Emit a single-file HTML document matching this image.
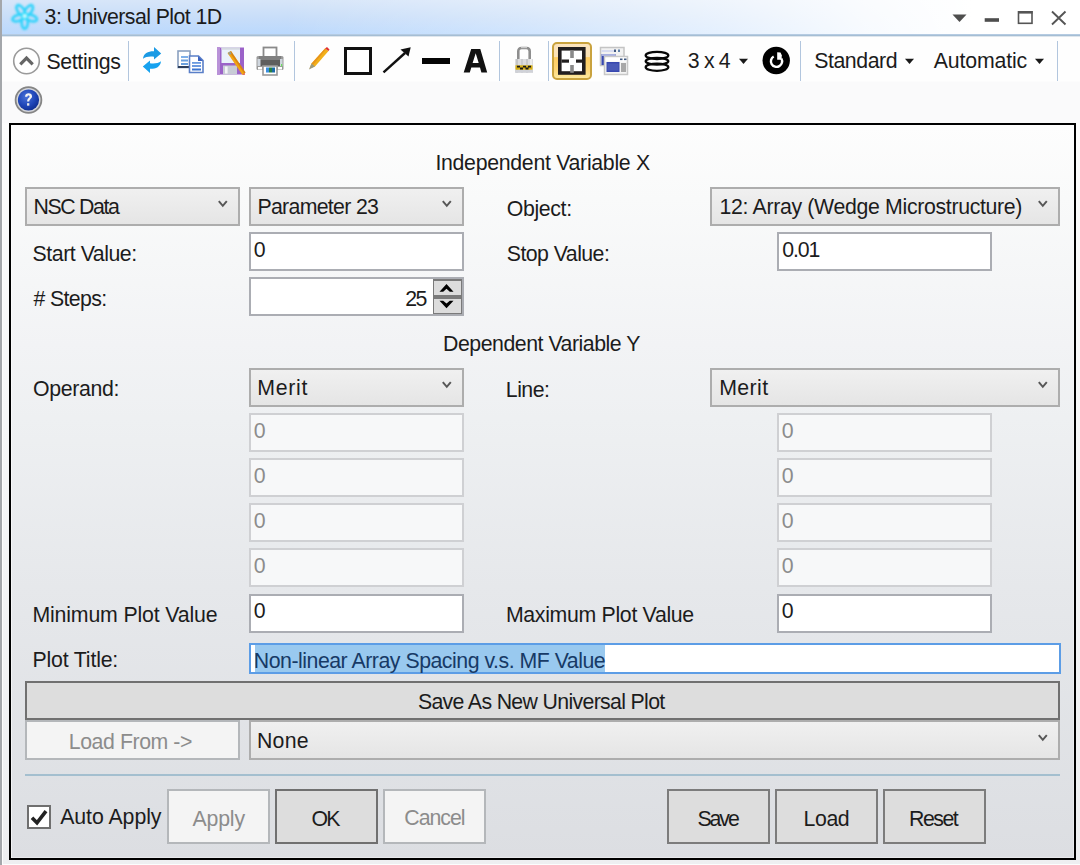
<!DOCTYPE html>
<html><head><meta charset="utf-8">
<style>
*{box-sizing:border-box;margin:0;padding:0}
html,body{width:1080px;height:865px;overflow:hidden}
body{position:relative;background:#fcfcfc;font-family:"Liberation Sans",sans-serif;font-size:20px;color:#1c1c1c}
.a{position:absolute}
svg{position:absolute;overflow:visible}
.t{position:absolute;white-space:nowrap;line-height:20px;height:20px;font-size:21.3px}
.gray{color:#8c8c8c}
.sel{color:#173a66}
#leftstrip{left:0;top:0;width:2px;height:865px;background:#a4a7ab}
#title{left:2px;top:0;width:1078px;height:34px;background:linear-gradient(90deg,rgba(255,255,255,0) 0%,rgba(255,255,255,0) 26%,rgba(255,255,255,0.3) 48%,rgba(255,255,255,0.6) 66%,rgba(255,255,255,0.88) 80%,#fff 90%,#fff 100%),linear-gradient(180deg,#d7e6f9 0%,#c9def9 50%,#bbd9fd 100%)}
#titleline{left:2px;top:34px;width:1078px;height:3px;background:linear-gradient(180deg,#b5cbe2 0px,#b5cbe2 1px,#a5bed4 1px,#a5bed4 2px,#dfe6ed 2px,#dfe6ed 3px)}
#toolbar{left:2px;top:37px;width:1078px;height:86px;background:linear-gradient(180deg,#fefefe 0px,#fefefe 44px,#fafafb 45px,#fafafb 87px)}
#margin{left:2px;top:123px;width:1078px;height:742px;background:linear-gradient(180deg,#fcfcfc 0%,#f6f7f8 40%,#eeeff1 100%);border-left:1px solid #fdfdfd}
.sep{position:absolute;width:1px;background:#b2c6de}
#panel{left:9px;top:123px;width:1067px;height:737px;border:2px solid #000;background:linear-gradient(180deg,#fdfdfd 0%,#f9fafa 10%,#f2f3f5 30%,#eef0f2 40%,#e6e8eb 63%,#dcdee2 100%);box-shadow:inset 1px 1px 0 rgba(255,255,255,0.6),inset -1px -1px 0 rgba(255,255,255,0.35)}
#below{left:2px;top:860px;width:1078px;height:5px;background:#ecedef}
#right{left:1076px;top:123px;width:4px;height:742px;background:#f3f3f5}
.combo{position:absolute;height:39px;border:2px solid #adadad;background:linear-gradient(180deg,#f0f0f0,#e5e5e5)}
.tb{position:absolute;height:39px;border:2px solid #abadb3;background:#fff}
.tbd{position:absolute;height:39px;border:2px solid #cfd0d3;background:#f7f8f9}
.btn{position:absolute;border:2px solid #707070;background:#dddddd}
.btnd{position:absolute;border:2px solid #b4b7ba;background:#f4f4f4}
</style></head><body>

<div id="leftstrip" class="a"></div>
<div id="title" class="a"></div>
<div id="titleline" class="a"></div>
<div id="toolbar" class="a"></div>
<div id="margin" class="a"></div>

<!-- title icon -->
<svg style="left:8px;top:0px" width="34" height="32" viewBox="0 0 34 32">
  <defs><filter id="bl" x="-20%" y="-20%" width="140%" height="140%"><feGaussianBlur stdDeviation="1"/></filter></defs>
  <g filter="url(#bl)" fill="none" stroke="#2fd3fb" stroke-width="2.6">
    <ellipse cx="23.2" cy="15.9" rx="6.4" ry="3.1" transform="rotate(90 16.7 15.9)"/>
    <ellipse cx="23.2" cy="15.9" rx="6.4" ry="3.1" transform="rotate(162 16.7 15.9)"/>
    <ellipse cx="23.2" cy="15.9" rx="6.4" ry="3.1" transform="rotate(234 16.7 15.9)"/>
    <ellipse cx="23.2" cy="15.9" rx="6.4" ry="3.1" transform="rotate(306 16.7 15.9)"/>
    <ellipse cx="23.2" cy="15.9" rx="6.4" ry="3.1" transform="rotate(18 16.7 15.9)"/>
    <circle cx="16.7" cy="15.9" r="2.5" fill="#f4ffff" stroke="#3ae4fc" stroke-width="2"/>
  </g>
</svg>

<!-- window controls -->
<svg style="left:950px;top:8px" width="125" height="20" viewBox="0 0 125 20">
  <path d="M2.5 6.5 L16.5 6.5 L9.5 14 Z" fill="#4e4e4e"/>
  <rect x="34.7" y="10.2" width="14.3" height="3.6" fill="#4e4e4e"/>
  <rect x="68.5" y="3.8" width="13.5" height="11.5" fill="none" stroke="#555" stroke-width="1.6"/>
  <rect x="68" y="3" width="14.6" height="2.6" fill="#555"/>
  <path d="M102 3.5 L115.5 16.5 M115.5 3.5 L102 16.5" stroke="#555" stroke-width="1.9"/>
</svg>

<!-- settings chevron circle -->
<svg style="left:12px;top:47px" width="29" height="29" viewBox="0 0 29 29">
  <circle cx="14.5" cy="14" r="12.8" fill="#fff" stroke="#9a9a9a" stroke-width="1.6"/>
  <path d="M8.3 17.3 L14.5 11.1 L20.7 17.3" fill="none" stroke="#666" stroke-width="3.2"/>
</svg>

<div class="sep" style="left:128px;top:41px;height:40px"></div>
<div class="sep" style="left:294px;top:41px;height:40px"></div>
<div class="sep" style="left:499px;top:41px;height:40px"></div>
<div class="sep" style="left:548px;top:41px;height:40px"></div>
<div class="sep" style="left:800px;top:41px;height:40px"></div>
<div class="sep" style="left:1057px;top:41px;height:40px"></div>

<!-- refresh -->
<svg style="left:142px;top:46px" width="20" height="28" viewBox="0 0 20 28">
  <path d="M1 12.8 C1.5 7 6.5 5 12 5.2 L12 1 L19.2 7.5 L12 13.5 L12 10.8 C7.5 10.3 3.5 10.8 1 12.8 Z" fill="#1b9ae4"/>
  <path d="M19 15.2 C18.5 21 13.5 23 8 22.8 L8 27 L0.8 20.5 L8 14.5 L8 17.2 C12.5 17.7 16.5 17.2 19 15.2 Z" fill="#17a2ef"/>
</svg>

<!-- copy -->
<svg style="left:177px;top:50px" width="28" height="24" viewBox="0 0 28 24">
  <rect x="1" y="1" width="12" height="16.5" fill="#fff" stroke="#8aa0c0" stroke-width="1.6"/>
  <rect x="1" y="16" width="12" height="2" fill="#2c3e5c"/>
  <rect x="4" y="6" width="7" height="2" fill="#7fb0e8"/>
  <rect x="4" y="9.5" width="7" height="2" fill="#6aa0de"/>
  <rect x="4" y="13" width="7" height="2" fill="#6aa0de"/>
  <path d="M12.5 6 L21.5 6 L26 10.5 L26 22.5 L12.5 22.5 Z" fill="#fff" stroke="#5a7fc8" stroke-width="1.6"/>
  <path d="M21 6 L21 11 L26 11 Z" fill="#3a62c0"/>
  <rect x="15" y="12" width="9" height="1.8" fill="#6a9ae0"/>
  <rect x="15" y="15.2" width="9" height="1.6" fill="#4a80d8"/>
  <rect x="15" y="18.5" width="9" height="2" fill="#3c74d0"/>
</svg>

<!-- save floppy with pencil -->
<svg style="left:216px;top:46px" width="30" height="30" viewBox="0 0 30 30">
  <rect x="1.5" y="1.5" width="26.5" height="27" fill="#9b62c8"/>
  <rect x="1" y="1" width="3" height="28" fill="#b992d8"/>
  <rect x="5.5" y="1.5" width="18.5" height="15.5" fill="#e9f1fb"/><rect x="5.5" y="1.5" width="18.5" height="2.2" fill="#d4d8e0"/>
  <rect x="7" y="19.5" width="14" height="9" fill="#c8ccd6"/>
  <rect x="9" y="20.5" width="2.6" height="7" fill="#f4f4f8"/>
  <path d="M11.5 7 L15 5 L29.5 26.5 L26.5 29 Z" fill="#f2a414"/><path d="M15 5 L29.5 26.5 L28.3 27.5 L13.5 6 Z" fill="#c87010" opacity="0.6"/>
  <path d="M12 6.5 L14.5 5.5 L15.5 8 L13 9 Z" fill="#9aa090"/>
  <path d="M27 28.5 L29 27 L28.5 29 Z" fill="#e02020"/>
</svg>

<!-- printer -->
<svg style="left:255px;top:46px" width="30" height="30" viewBox="0 0 30 30">
  <rect x="8.5" y="1.5" width="13" height="10" fill="#fff" stroke="#8a8a8a" stroke-width="1.8"/>
  <rect x="1.5" y="10" width="27" height="14" rx="1.5" fill="#9a9a9a"/>
  <rect x="4.5" y="10" width="21" height="10" fill="#5e5e5e"/>
  <rect x="4.5" y="10" width="21" height="4" fill="#808080"/>
  <rect x="2.5" y="13" width="3" height="7" fill="#cfd6de"/>
  <rect x="25" y="13" width="2.5" height="7" fill="#cfd6de"/>
  <rect x="26" y="18" width="1.2" height="2.5" fill="#6ee060"/>
  <rect x="3" y="21" width="4" height="2.5" fill="#fff"/>
  <rect x="23" y="21" width="4" height="2.5" fill="#fff"/>
  <rect x="8" y="20" width="14" height="9" fill="#fff" stroke="#999" stroke-width="1.6"/>
  <rect x="11" y="21.5" width="3" height="5" fill="#3a8ee0"/>
  <rect x="14" y="21.5" width="3" height="5" fill="#2a8040"/>
  <rect x="17" y="21.5" width="3" height="5" fill="#1a6aa8"/>
</svg>

<!-- pencil -->
<svg style="left:308px;top:46px" width="23" height="25" viewBox="0 0 23 25">
  <path d="M1.5 22.5 L3.5 17.5 L17 2.5 L20.5 5 L7 20.5 Z" fill="#f2b01a"/>
  <path d="M3.5 17.5 L17 2.5 L18 3.2 L5 19 Z" fill="#e8941a"/>
  <path d="M17 2.5 L19 1 L21.5 3.5 L20.5 5 Z" fill="#e03030"/>
  <path d="M1 23.5 L3.5 17.5 L7 20.5 Z" fill="#9a9a80"/>
</svg>

<!-- square -->
<div class="a" style="left:344px;top:47px;width:27.5px;height:27.5px;border:3.6px solid #111;background:#fff"></div>

<!-- arrow -->
<svg style="left:380px;top:45px" width="34" height="30" viewBox="0 0 34 30">
  <path d="M3.5 27.3 L25 8" stroke="#111" stroke-width="2.4"/>
  <path d="M20.5 4.5 L30.7 2.3 L28.5 11.6 Z" fill="#111"/>
</svg>

<!-- line -->
<div class="a" style="left:422px;top:57.5px;width:28px;height:6.8px;background:#050505"></div>

<!-- A -->
<svg style="left:460px;top:44px" width="32" height="32" viewBox="0 0 32 32">
  <path d="M3.7 28.5 L11.2 5 L20.3 5 L27.2 28.5 L21.4 28.5 L20 23.6 L11.3 23.6 L9.8 28.5 Z M12.6 19 L18.7 19 L15.7 9.2 Z" fill="#111" fill-rule="evenodd"/>
</svg>

<!-- lock -->
<svg style="left:514px;top:46px" width="20" height="28" viewBox="0 0 20 28">
  <path d="M4.3 13.5 V5.2 Q4.3 2 7.5 2 H12.5 Q15.7 2 15.7 5.2 V13.5" fill="none" stroke="#8e8e8e" stroke-width="2.6"/>
  <rect x="7" y="1" width="6" height="1.2" fill="#c8c8c8"/>
  <rect x="1" y="13" width="18" height="13.7" fill="#dcdcde"/>
  <rect x="2" y="13" width="2" height="13.7" fill="#c4c6c8"/>
  <rect x="7" y="13" width="2" height="13.7" fill="#cacccf"/>
  <rect x="12" y="13" width="2" height="13.7" fill="#c6c8ca"/>
  <rect x="16" y="13" width="2" height="13.7" fill="#eeeeee"/>
  <rect x="1.5" y="19.3" width="17" height="4.4" fill="#d6ae12"/>
  <path d="M3 19.8 h3 v1.8 h-3z M9 19.8 h3 v1.8 h-3z M14 19.8 h3 v1.8 h-3z M6 21.6 h3 v1.8 h-3z M11.5 21.6 h3 v1.8 h-3z" fill="#1a1a1a"/>
  <rect x="1" y="24" width="18" height="2.7" fill="#d0d2d8"/>
</svg>

<!-- highlighted grid button -->
<div class="a" style="left:552px;top:42px;width:39.5px;height:37.5px;border:2px solid #c9a23e;border-radius:5px;background:linear-gradient(180deg,#fbe3bd 0%,#fbe2b5 38%,#ffcd62 40%,#ffd676 75%,#fde9a0 100%)"></div>
<svg style="left:557px;top:46px" width="30" height="30" viewBox="0 0 30 30">
  <rect x="2.8" y="2.8" width="24" height="24.2" fill="#fff" stroke="#221e1f" stroke-width="3.6"/>
  <rect x="4.5" y="13.5" width="7.5" height="3.2" fill="#221e1f"/>
  <rect x="19" y="13.5" width="7.5" height="3.2" fill="#221e1f"/>
  <rect x="13.2" y="4.5" width="3.6" height="7.5" fill="#8a8a8a"/>
  <rect x="13.2" y="19" width="3.6" height="7.8" fill="#8a8a8a"/>
</svg>

<!-- window icon -->
<svg style="left:599px;top:46px" width="30" height="30" viewBox="0 0 30 30">
  <rect x="1.5" y="1.5" width="23.5" height="18" fill="#f2f2f2" stroke="#c4c4c4" stroke-width="1.5"/>
  <rect x="2.5" y="4" width="13" height="2" fill="#d8dcf0"/>
  <rect x="15" y="3.5" width="2" height="2.5" fill="#405880"/>
  <rect x="19" y="3.5" width="2" height="2.5" fill="#6080a8"/>
  <rect x="2.5" y="8" width="14" height="11" fill="#3848b0"/>
  <rect x="2.5" y="8" width="14" height="2" fill="#a8b0e0"/>
  <rect x="5.5" y="10.5" width="23" height="18" fill="#f4f4f4" stroke="#c8c8c8" stroke-width="1.5"/>
  <rect x="6.5" y="11.5" width="21" height="4" fill="#fff"/>
  <rect x="21" y="12.5" width="2.5" height="1.6" fill="#405880"/>
  <rect x="25" y="12.5" width="2.5" height="1.6" fill="#405880"/>
  <rect x="7.5" y="16" width="13" height="10" fill="#3848b0"/>
  <rect x="8.5" y="17.5" width="11" height="7" fill="#4a5ab8"/>
  <rect x="22" y="17" width="5" height="9" fill="#a8a8a8"/>
</svg>

<!-- layers -->
<svg style="left:643px;top:49px" width="29" height="24" viewBox="0 0 29 24">
  <g fill="none" stroke="#080808" stroke-width="2.3">
    <ellipse cx="14" cy="6.4" rx="11.3" ry="3.6"/>
    <ellipse cx="14" cy="12.2" rx="11.3" ry="3.4"/>
    <ellipse cx="14" cy="18.2" rx="11.3" ry="3.6"/>
  </g>
</svg>

<!-- dropdown arrows -->
<svg style="left:738px;top:58px" width="11" height="7" viewBox="0 0 11 7"><path d="M1 0.8 L10 0.8 L5.5 6 Z" fill="#1a1a1a"/></svg>
<svg style="left:904px;top:58px" width="11" height="7" viewBox="0 0 11 7"><path d="M1 0.8 L10 0.8 L5.5 6 Z" fill="#1a1a1a"/></svg>
<svg style="left:1034px;top:58px" width="11" height="7" viewBox="0 0 11 7"><path d="M1 0.8 L10 0.8 L5.5 6 Z" fill="#1a1a1a"/></svg>

<!-- power/reset icon -->
<svg style="left:762px;top:46px" width="29" height="29" viewBox="0 0 29 29">
  <circle cx="14.2" cy="14.55" r="13.7" fill="#000"/>
  <path d="M11.7 10.45 A5.6 5.6 0 1 0 19.35 12.5" fill="none" stroke="#fff" stroke-width="2.4"/>
  <path d="M15.2 6.3 L18.5 6.6 L19.8 9.2 L19.6 13.8 L15.2 13.8 Z" fill="#fff"/>
</svg>

<!-- help icon -->
<svg style="left:14px;top:86px" width="29" height="28" viewBox="0 0 29 28">
  <defs><radialGradient id="hg" cx="0.4" cy="0.35" r="0.7"><stop offset="0" stop-color="#4a72d8"/><stop offset="0.6" stop-color="#1f46b8"/><stop offset="1" stop-color="#0e2c8e"/></radialGradient></defs>
  <circle cx="14.5" cy="14" r="12.9" fill="#d4d6da" stroke="#858585" stroke-width="1.8"/>
  <circle cx="14.5" cy="14" r="10.6" fill="url(#hg)"/>
  <g transform="translate(14.6 13.5) scale(0.82) translate(-14.8 -13)">
  <path d="M10.5 9.5 C10.5 6.8 12.5 5.5 14.8 5.5 C17.3 5.5 19 7 19 9.2 C19 11.8 15.8 12.2 15.6 15.5 L13 15.5 C13 11.6 16 11 16 9.4 C16 8.5 15.5 8 14.7 8 C13.8 8 13.3 8.7 13.3 9.5 Z" fill="#f4f4f4"/>
  <rect x="12.9" y="17.5" width="2.8" height="3" fill="#e8e8e8"/>
  </g>
</svg>

<!-- panel -->
<div class="a" style="left:2px;top:864px;width:1078px;height:1px;background:#fdfdfd"></div>
<div id="panel" class="a"></div>

<div class="combo" style="left:25px;top:187px;width:215px"></div>
<div class="combo" style="left:249px;top:187px;width:215px"></div>
<div class="combo" style="left:710px;top:187px;width:350px"></div>

<div class="tb" style="left:249px;top:232px;width:215px"></div>
<div class="tb" style="left:777px;top:232px;width:215px"></div>
<div class="tb" style="left:249px;top:277px;width:215px"></div>

<!-- spinner -->
<div class="a" style="left:433px;top:279px;width:29px;height:35px;background:#7a7a7a"></div>
<div class="a" style="left:434px;top:281px;width:26.5px;height:14px;background:#dcdcdc"></div>
<div class="a" style="left:434px;top:298.5px;width:26.5px;height:14px;background:#dcdcdc"></div>
<svg style="left:439px;top:283px" width="16" height="26" viewBox="0 0 16 26">
  <path d="M0.5 8.7 L7.5 1 L14.5 8.7 L10.8 8.7 L7.5 5.8 L4.2 8.7 Z" fill="#000"/>
  <path d="M0.5 17.8 L7.5 25.3 L14.5 17.8 L10.8 17.8 L7.5 20.6 L4.2 17.8 Z" fill="#000"/>
</svg>

<div class="combo" style="left:249px;top:368px;width:215px"></div>
<div class="combo" style="left:710px;top:368px;width:350px"></div>

<div class="tbd" style="left:249px;top:413px;width:215px"></div>
<div class="tbd" style="left:777px;top:413px;width:215px"></div>
<div class="tbd" style="left:249px;top:458px;width:215px"></div>
<div class="tbd" style="left:777px;top:458px;width:215px"></div>
<div class="tbd" style="left:249px;top:503px;width:215px"></div>
<div class="tbd" style="left:777px;top:503px;width:215px"></div>
<div class="tbd" style="left:249px;top:548px;width:215px"></div>
<div class="tbd" style="left:777px;top:548px;width:215px"></div>

<div class="tb" style="left:249px;top:594px;width:215px"></div>
<div class="tb" style="left:777px;top:594px;width:215px"></div>

<div class="a" style="left:249px;top:643px;width:812px;height:31px;border:2px solid #5c9de6;background:#fff"></div>
<div class="a" style="left:255px;top:645px;width:350px;height:27px;background:#99c9ef"></div>

<div class="btn" style="left:25px;top:681px;width:1035px;height:39px"></div>
<div class="btnd" style="left:25px;top:720px;width:215px;height:40px"></div>
<div class="combo" style="left:249px;top:720px;width:811px;height:40px"></div>

<!-- combo chevrons -->
<svg style="left:217px;top:199px" width="12" height="9" viewBox="0 0 12 9"><path d="M1.8 2.2 L5.8 6.8 L9.8 2.2" fill="none" stroke="#575757" stroke-width="2.0"/></svg>
<svg style="left:441px;top:199px" width="12" height="9" viewBox="0 0 12 9"><path d="M1.8 2.2 L5.8 6.8 L9.8 2.2" fill="none" stroke="#575757" stroke-width="2.0"/></svg>
<svg style="left:1037px;top:199px" width="12" height="9" viewBox="0 0 12 9"><path d="M1.8 2.2 L5.8 6.8 L9.8 2.2" fill="none" stroke="#575757" stroke-width="2.0"/></svg>
<svg style="left:441px;top:380px" width="12" height="9" viewBox="0 0 12 9"><path d="M1.8 2.2 L5.8 6.8 L9.8 2.2" fill="none" stroke="#575757" stroke-width="2.0"/></svg>
<svg style="left:1037px;top:380px" width="12" height="9" viewBox="0 0 12 9"><path d="M1.8 2.2 L5.8 6.8 L9.8 2.2" fill="none" stroke="#575757" stroke-width="2.0"/></svg>
<svg style="left:1037px;top:733px" width="12" height="9" viewBox="0 0 12 9"><path d="M1.8 2.2 L5.8 6.8 L9.8 2.2" fill="none" stroke="#575757" stroke-width="2.0"/></svg>

<div class="a" style="left:25px;top:774px;width:1035px;height:2px;background:#a4bfcf"></div>

<div class="a" style="left:27px;top:805px;width:24px;height:24px;border:2px solid #6f6f6f;background:#fff"></div>
<svg style="left:29px;top:807px" width="20" height="20" viewBox="0 0 20 20"><path d="M3 10.8 L8 15.8 L17 4.2" fill="none" stroke="#222" stroke-width="3.6"/></svg>

<div class="btnd" style="left:167px;top:789px;width:103px;height:55px"></div>
<div class="btn" style="left:275px;top:789px;width:103px;height:55px"></div>
<div class="btnd" style="left:383px;top:789px;width:103px;height:55px"></div>
<div class="btn" style="left:667px;top:789px;width:103px;height:55px;border-color:#7c7c7c"></div>
<div class="btn" style="left:775px;top:789px;width:103px;height:55px;border-color:#7c7c7c"></div>
<div class="btn" style="left:883px;top:789px;width:103px;height:55px;border-color:#7c7c7c"></div>

<div id="t_title" class="t" style="left:44.6px;top:7px;letter-spacing:-0.558px">3: Universal Plot 1D</div>
<div id="t_settings" class="t" style="left:46.4px;top:52px;letter-spacing:-0.343px">Settings</div>
<div id="t_3x4" class="t" style="left:687.8px;top:51px;letter-spacing:-0.825px">3 x 4</div>
<div id="t_std" class="t" style="left:814.2px;top:51px;letter-spacing:-0.429px">Standard</div>
<div id="t_auto" class="t" style="left:933.7px;top:51px;letter-spacing:-0.150px">Automatic</div>
<div id="t_indep" class="t" style="left:435.4px;top:153px;letter-spacing:-0.295px">Independent Variable X</div>
<div id="t_nsc" class="t" style="left:33.5px;top:197px;letter-spacing:-1.357px">NSC Data</div>
<div id="t_param" class="t" style="left:257.4px;top:197px;letter-spacing:-0.682px">Parameter 23</div>
<div id="t_object" class="t" style="left:506.8px;top:199px;letter-spacing:-0.367px">Object:</div>
<div id="t_array" class="t" style="left:719.5px;top:197px;letter-spacing:-0.332px">12: Array (Wedge Microstructure)</div>
<div id="t_start" class="t" style="left:32.6px;top:244px;letter-spacing:-0.473px">Start Value:</div>
<div id="t_start0" class="t" style="left:253.7px;top:240px;letter-spacing:0.000px">0</div>
<div id="t_stop" class="t" style="left:506.8px;top:244px;letter-spacing:-0.550px">Stop Value:</div>
<div id="t_stop0" class="t" style="left:782.3px;top:240px;letter-spacing:-1.133px">0.01</div>
<div id="t_steps" class="t" style="left:33.6px;top:289px;letter-spacing:-0.657px"># Steps:</div>
<div id="t_25" class="t" style="left:405.2px;top:289px;letter-spacing:-1.600px">25</div>
<div id="t_dep" class="t" style="left:443.1px;top:334px;letter-spacing:-0.479px">Dependent Variable Y</div>
<div id="t_operand" class="t" style="left:33.0px;top:379px;letter-spacing:-0.343px">Operand:</div>
<div id="t_merit1" class="t" style="left:257.2px;top:378px;letter-spacing:0.725px">Merit</div>
<div id="t_line" class="t" style="left:505.8px;top:380px;letter-spacing:-0.500px">Line:</div>
<div id="t_merit2" class="t" style="left:719.2px;top:378px;letter-spacing:0.400px">Merit</div>
<div id="t_d1" class="t gray" style="left:253.7px;top:421px;letter-spacing:0.000px">0</div>
<div id="t_d2" class="t gray" style="left:781.7px;top:421px;letter-spacing:0.000px">0</div>
<div id="t_d3" class="t gray" style="left:253.7px;top:466px;letter-spacing:0.000px">0</div>
<div id="t_d4" class="t gray" style="left:781.7px;top:466px;letter-spacing:0.000px">0</div>
<div id="t_d5" class="t gray" style="left:253.7px;top:511px;letter-spacing:0.000px">0</div>
<div id="t_d6" class="t gray" style="left:781.7px;top:511px;letter-spacing:0.000px">0</div>
<div id="t_d7" class="t gray" style="left:253.7px;top:556px;letter-spacing:0.000px">0</div>
<div id="t_d8" class="t gray" style="left:781.7px;top:556px;letter-spacing:0.000px">0</div>
<div id="t_min" class="t" style="left:32.4px;top:605px;letter-spacing:-0.159px">Minimum Plot Value</div>
<div id="t_min0" class="t" style="left:253.7px;top:601px;letter-spacing:0.000px">0</div>
<div id="t_max" class="t" style="left:505.9px;top:605px;letter-spacing:-0.318px">Maximum Plot Value</div>
<div id="t_max0" class="t" style="left:781.7px;top:601px;letter-spacing:0.000px">0</div>
<div id="t_ptitle" class="t" style="left:32.4px;top:650px;letter-spacing:-0.170px">Plot Title:</div>
<div id="t_nonlin" class="t sel" style="left:253.8px;top:651px;letter-spacing:-0.481px">Non-linear Array Spacing v.s. MF Value</div>
<div id="t_saveas" class="t" style="left:417.9px;top:692px;letter-spacing:-0.664px">Save As New Universal Plot</div>
<div id="t_loadfrom" class="t gray" style="left:68.8px;top:732px;letter-spacing:-0.436px">Load From -&gt;</div>
<div id="t_none" class="t" style="left:257.0px;top:731px;letter-spacing:0.233px">None</div>
<div id="t_autoapply" class="t" style="left:60.2px;top:807px;letter-spacing:-0.056px">Auto Apply</div>
<div id="t_apply" class="t gray" style="left:192.5px;top:809px;letter-spacing:-0.175px">Apply</div>
<div id="t_ok" class="t" style="left:311.5px;top:809px;letter-spacing:-1.800px">OK</div>
<div id="t_cancel" class="t gray" style="left:404.3px;top:808px;letter-spacing:-1.020px">Cancel</div>
<div id="t_save" class="t" style="left:697.4px;top:809px;letter-spacing:-2.033px">Save</div>
<div id="t_load" class="t" style="left:803.5px;top:809px;letter-spacing:-0.400px">Load</div>
<div id="t_reset" class="t" style="left:909.0px;top:809px;letter-spacing:-1.475px">Reset</div>
</body></html>
